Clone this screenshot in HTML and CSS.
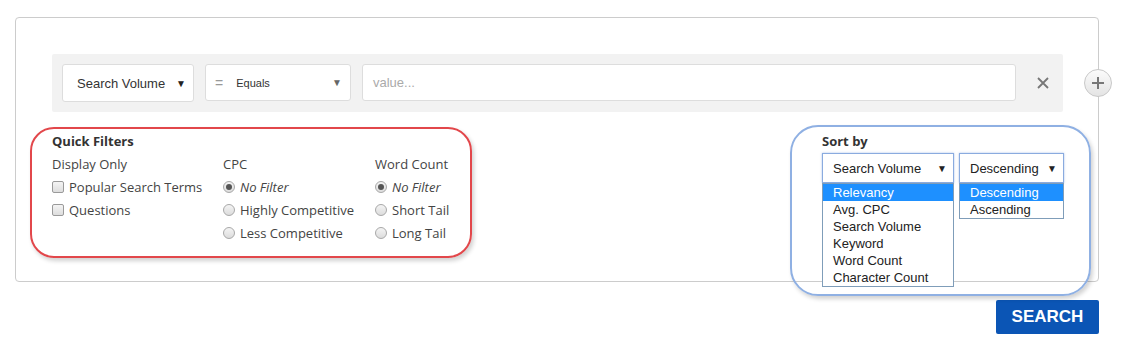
FILE: index.html
```html
<!DOCTYPE html>
<html lang="en">

<head>
    <meta charset="UTF-8">
    <meta name="viewport" content="width=device-width, initial-scale=1.0">
    <title>Keyword Filters</title>
    <link rel="stylesheet" href="styles.css">
</head>

<body>
    <div class="page">

        <div class="panel">
            <!-- Filter row -->
            <div class="filter-bar">
                <div class="field field-metric">
                    <span>Search Volume</span>
                    <span class="caret">&#9660;</span>
                </div>
                <div class="field field-operator">
                    <span class="operator-sign">=</span>
                    <span class="operator-text">Equals</span>
                    <span class="caret caret-light">&#9660;</span>
                </div>
                <div class="field field-value">
                    <span class="placeholder">value...</span>
                </div>
                <button class="filter-remove" aria-label="Remove filter">
                    <svg width="12" height="12" viewBox="0 0 12 12">
                        <path d="M1 1 L11 11 M11 1 L1 11" stroke="#777" stroke-width="1.8" fill="none" />
                    </svg>
                </button>
            </div>

            <button class="filter-add" aria-label="Add filter">
                <svg width="14" height="14" viewBox="0 0 14 14">
                    <path d="M7 1 V13 M1 7 H13" stroke="#777" stroke-width="2" fill="none" />
                </svg>
            </button>

            <div class="options">
                <!-- Quick filters -->
                <div class="quick-filters">
                    <div class="heading">Quick Filters</div>
                    <div class="filter-columns">
                        <div class="filter-col col-display">
                            <div class="col-title">Display Only</div>
                            <label class="opt"><span class="check"></span>Popular Search Terms</label>
                            <label class="opt"><span class="check"></span>Questions</label>
                        </div>
                        <div class="filter-col col-cpc">
                            <div class="col-title">CPC</div>
                            <label class="opt"><span class="radio checked"></span><em>No Filter</em></label>
                            <label class="opt"><span class="radio"></span>Highly Competitive</label>
                            <label class="opt"><span class="radio"></span>Less Competitive</label>
                        </div>
                        <div class="filter-col col-words">
                            <div class="col-title">Word Count</div>
                            <label class="opt"><span class="radio checked"></span><em>No Filter</em></label>
                            <label class="opt"><span class="radio"></span>Short Tail</label>
                            <label class="opt"><span class="radio"></span>Long Tail</label>
                        </div>
                    </div>
                </div>

                <!-- Sort by -->
                <div class="sort-by">
                    <div class="heading">Sort by</div>
                    <div class="sort-selects">
                        <div class="dropdown dropdown-field">
                            <div class="dropdown-box">
                                <span>Search Volume</span>
                                <span class="caret">&#9660;</span>
                            </div>
                            <ul class="dropdown-list">
                                <li class="selected">Relevancy</li>
                                <li>Avg. CPC</li>
                                <li>Search Volume</li>
                                <li>Keyword</li>
                                <li>Word Count</li>
                                <li>Character Count</li>
                            </ul>
                        </div>
                        <div class="dropdown dropdown-order">
                            <div class="dropdown-box">
                                <span>Descending</span>
                                <span class="caret">&#9660;</span>
                            </div>
                            <ul class="dropdown-list">
                                <li class="selected">Descending</li>
                                <li>Ascending</li>
                            </ul>
                        </div>
                    </div>
                </div>
            </div>
        </div>

        <div class="actions">
            <button class="search-btn">SEARCH</button>
        </div>

        <!-- annotation marks over the screenshot -->
        <div class="mark mark-red"></div>
        <div class="mark mark-blue"></div>
    </div>
</body>

</html>
```

FILE: styles.css
```css
* {
    box-sizing: border-box;
}

body {
    margin: 0;
    background: #ffffff;
    font-family: "Liberation Sans", Arial, sans-serif;
    color: #333333;
}

.page {
    position: relative;
    width: 1099px;
    padding: 17px 0 0 15px;
}

.panel {
    position: relative;
    height: 265px;
    border: 1px solid #cccccc;
    border-radius: 4px;
    padding: 36px 35px 0 36px;
}

/* filter row */

.filter-bar {
    display: flex;
    align-items: flex-start;
    height: 58px;
    padding: 10px 0 0 10px;
    background: #f2f2f2;
    border-radius: 2px;
}

.field {
    display: flex;
    align-items: center;
    background: #ffffff;
    border: 1px solid #dddddd;
    border-radius: 3px;
    font-size: 13px;
}

.field-metric {
    width: 132px;
    height: 38px;
    padding: 0 7px 0 14px;
    justify-content: space-between;
    color: #333333;
}

.field-operator {
    width: 146px;
    height: 37px;
    margin-left: 11px;
    padding: 0 8px 0 9px;
    font-size: 11px;
}

.operator-sign {
    color: #999999;
    font-size: 14px;
    margin-right: 13px;
}

.operator-text {
    flex: 1;
}

.field-value {
    width: 654px;
    height: 37px;
    margin-left: 11px;
    padding: 0 10px;
}

.placeholder {
    color: #aaaaaa;
}

.caret {
    font-size: 10px;
    color: #222222;
}

.caret-light {
    color: #666666;
}

.filter-remove {
    width: 46px;
    height: 37px;
    border: none;
    background: transparent;
    display: flex;
    align-items: center;
    justify-content: center;
    padding: 0 0 0 8px;
}

.filter-add {
    position: absolute;
    top: 51px;
    right: -14px;
    width: 28px;
    height: 28px;
    border-radius: 50%;
    border: 1px solid #c8c8c8;
    background: linear-gradient(#fbfbfb, #e4e4e4);
    display: flex;
    align-items: center;
    justify-content: center;
    padding: 0;
}

/* options */

.options {
    display: flex;
    justify-content: space-between;
    margin-top: 18px;
    font-family: "Open Sans", sans-serif;
    font-size: 13px;
    color: #444444;
}

.heading {
    height: 23px;
    line-height: 22px;
    font-weight: bold;
    color: #333333;
}

.filter-columns {
    display: flex;
}

.col-display {
    width: 171px;
}

.col-cpc {
    width: 152px;
}

.col-title,
.opt {
    display: flex;
    align-items: center;
    height: 23px;
    padding-bottom: 1px;
    white-space: nowrap;
}

.opt em {
    font-style: italic;
}

.check {
    width: 12px;
    height: 12px;
    margin-right: 5px;
    border: 1px solid #9a9a9a;
    border-radius: 2px;
    background: linear-gradient(#f4f4f4, #dddddd);
}

.radio {
    width: 12px;
    height: 12px;
    margin-right: 5px;
    border: 1px solid #a8a8a8;
    border-radius: 50%;
    background: linear-gradient(#f4f4f4, #dcdcdc);
    position: relative;
}

.radio.checked::after {
    content: "";
    position: absolute;
    left: 2px;
    top: 2px;
    width: 6px;
    height: 6px;
    border-radius: 50%;
    background: #555555;
}

.sort-by {
    width: 242px;
    margin-right: -1px;
}

.sort-selects {
    display: flex;
    align-items: flex-start;
    font-family: "Liberation Sans", Arial, sans-serif;
    color: #222222;
}

.dropdown-field {
    width: 132px;
}

.dropdown-order {
    width: 105px;
    margin-left: 5px;
}

.dropdown-box {
    display: flex;
    align-items: center;
    justify-content: space-between;
    height: 30px;
    padding: 0 6px 0 10px;
    border: 1px solid #8aabdf;
    box-shadow: 0 0 2px rgba(82, 134, 210, 0.5);
    background: #ffffff;
}

.dropdown-list {
    list-style: none;
    margin: 0;
    padding: 0;
    border: 1px solid #7f9db9;
    background: #ffffff;
}

.dropdown-list li {
    height: 17px;
    line-height: 17px;
    padding-left: 10px;
    color: #222222;
}

.dropdown-list li.selected {
    background: #1e90ff;
    color: #ffffff;
}

/* search button */

.actions {
    display: flex;
    justify-content: flex-end;
    margin-top: 18px;
}

.search-btn {
    width: 103px;
    height: 34px;
    border: none;
    border-radius: 2px;
    background: #0b55b5;
    color: #ffffff;
    font-family: "Liberation Sans", Arial, sans-serif;
    font-weight: bold;
    font-size: 17px;
}

/* annotation marks */

.mark {
    position: absolute;
    pointer-events: none;
    border-width: 2px;
    border-style: solid;
    box-shadow: 2px 3px 4px rgba(0, 0, 0, 0.18);
}

.mark-red {
    left: 30px;
    top: 127px;
    width: 442px;
    height: 131px;
    border-color: #e2474b;
    border-radius: 24px;
}

.mark-blue {
    left: 790px;
    top: 125px;
    width: 301px;
    height: 171px;
    border-color: #8fb0e3;
    border-radius: 28px;
}
```
